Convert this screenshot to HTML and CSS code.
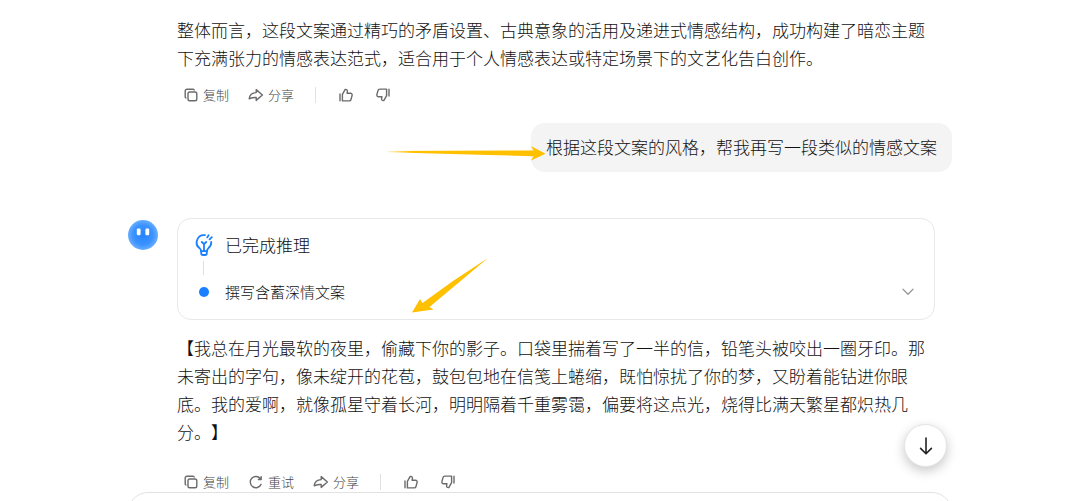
FILE: index.html
```
<!DOCTYPE html>
<html lang="zh-CN">
<head>
    <meta charset="UTF-8">
    <meta name="viewport" content="width=device-width, initial-scale=1.0">
    <title>情感文案</title>
    <link rel="stylesheet" href="styles.css">
</head>
<body>
    <!-- Shared icons -->
    <svg class="sprite" aria-hidden="true">
        <symbol id="icon-copy" viewBox="0 0 16 16">
            <rect x="5" y="5" width="8.8" height="8.8" rx="1.8"/>
            <path d="M3 11A1.500 1.500 0 0 1 2.200 9.700V4A1.800 1.800 0 0 1 4 2.200H9.900A1.500 1.500 0 0 1 11.200 3"/>
        </symbol>
        <symbol id="icon-retry" viewBox="0 0 16 16">
            <path d="M13 10.400A5.600 5.600 0 1 1 12.600 5M13.200 2.600V5.500H10.400"/>
        </symbol>
        <symbol id="icon-share" viewBox="0 0 16 16">
            <path d="M8.200 2.600L14.400 8L8.200 13.400V10.500C5.400 10.200 3.600 10.800 1.200 11.800C1.600 8.200 4 5.700 8.200 5.600Z"/>
        </symbol>
        <symbol id="icon-like" viewBox="0 0 16 16">
            <path d="M2 7V13.800M4.400 7.300L7.200 2.400C8.900 2.200 9.600 3.200 9.400 4.400L9.100 6.300H12.400C13.700 6.300 14.400 7.300 14.100 8.400L13 12.500C12.800 13.400 12.100 13.900 11.200 13.900H4.400Z"/>
        </symbol>
    </svg>

    <main class="chat">
        <section class="answer">
            <p class="text">整体而言，这段文案通过精巧的矛盾设置、古典意象的活用及递进式情感结构，成功构建了暗恋主题下充满张力的情感表达范式，适合用于个人情感表达或特定场景下的文艺化告白创作。</p>
            <div class="toolbar">
                <button type="button"><svg><use href="#icon-copy"/></svg>复制</button>
                <button type="button"><svg><use href="#icon-share"/></svg>分享</button>
                <span class="divider"></span>
                <button type="button" class="vote" aria-label="赞"><svg><use href="#icon-like"/></svg></button>
                <button type="button" class="vote down" aria-label="踩"><svg><use href="#icon-like"/></svg></button>
            </div>
        </section>

        <section class="question">
            <div class="bubble">
                根据这段文案的风格，帮我再写一段类似的情感文案
                <svg class="arrow arrow-right" viewBox="0 0 158 16" aria-hidden="true">
                    <defs>
                        <linearGradient id="fade" x1="0" x2="1" y1="0" y2="0">
                            <stop offset="0" stop-color="#ffc000" stop-opacity="0.2"/>
                            <stop offset="0.15" stop-color="#ffc000"/>
                        </linearGradient>
                    </defs>
                    <path fill="url(#fade)" d="M0 6L145.500 5.500L143 1L157.500 8.800L143 15.500L145.500 11.200L100 10L0 7.200Z"/>
                </svg>
            </div>
        </section>

        <section class="answer latest">
            <svg class="avatar" viewBox="0 0 30 30" aria-hidden="true">
                <defs>
                    <radialGradient id="face">
                        <stop offset="0" stop-color="#2484ff"/>
                        <stop offset="0.65" stop-color="#3a92ff"/>
                        <stop offset="1" stop-color="#69adff"/>
                    </radialGradient>
                </defs>
                <circle cx="15" cy="15" r="15" fill="url(#face)"/>
                <rect x="8.800" y="8.600" width="3.800" height="6.600" rx="1.200" fill="#fff"/>
                <rect x="17.400" y="8.600" width="3.800" height="6.600" rx="1.200" fill="#fff"/>
            </svg>

            <div class="steps">
                <div class="step step-done">
                    <svg class="bulb" viewBox="0 0 18 24" aria-hidden="true">
                        <path d="M10 2.200A7.300 7.300 0 0 0 4.800 15.400C5.800 16.200 6 17.200 6 18.200H12C12 17.200 12.300 16.200 13.300 15.300A7.300 7.300 0 0 0 16.200 8.800"/>
                        <path d="M6.200 18.500V20.300A1.700 1.700 0 0 0 7.900 22H10.100A1.700 1.700 0 0 0 11.800 20.300V18.500M6.800 9L9 11.200L11.200 9M9 11.200V17.600M12.200 4.400L13.600 2.200M14.600 6.400L16.800 4.200"/>
                    </svg>
                    <span>已完成推理</span>
                </div>
                <div class="line"></div>
                <div class="step">
                    <span class="dot"></span>
                    <span>撰写含蓄深情文案</span>
                    <button type="button" class="expand" aria-label="展开">
                        <svg viewBox="0 0 12 8"><path d="M1 1.200L6 6.200L11 1.200"/></svg>
                    </button>
                </div>
                <svg class="arrow arrow-down" viewBox="0 0 78 56" aria-hidden="true">
                    <path fill="#ffc000" d="M77 0L18.500 49L22.500 51.500L1 54.500L9 41L11.500 45L42 23Z"/>
                </svg>
            </div>

            <p class="text">【我总在月光最软的夜里，偷藏下你的影子。口袋里揣着写了一半的信，铅笔头被咬出一圈牙印。那未寄出的字句，像未绽开的花苞，鼓包包地在信笺上蜷缩，既怕惊扰了你的梦，又盼着能钻进你眼底。我的爱啊，就像孤星守着长河，明明隔着千重雾霭，偏要将这点光，烧得比满天繁星都炽热几分。】</p>
            <div class="toolbar">
                <button type="button"><svg><use href="#icon-copy"/></svg>复制</button>
                <button type="button"><svg><use href="#icon-retry"/></svg>重试</button>
                <button type="button"><svg><use href="#icon-share"/></svg>分享</button>
                <span class="divider"></span>
                <button type="button" class="vote" aria-label="赞"><svg><use href="#icon-like"/></svg></button>
                <button type="button" class="vote down" aria-label="踩"><svg><use href="#icon-like"/></svg></button>
            </div>

            <button type="button" class="to-bottom" aria-label="回到底部">
                <svg viewBox="0 0 14 18"><path d="M7 1V16.500M1.600 11.400L7 16.800L12.400 11.400"/></svg>
            </button>
        </section>

        <textarea class="composer" aria-label="输入消息"></textarea>
    </main>
</body>
</html>
```

FILE: styles.css
```
* {
    box-sizing: border-box;
}
html, body {
    height: 100%;
    margin: 0;
}
body {
    overflow: hidden;
    background: #fff;
    color: #111;
    font-family: "Noto Sans CJK SC", sans-serif;
    font-size: 17px;
    font-weight: 300;
    line-height: 28px;
    text-spacing-trim: space-all;
}
button {
    display: flex;
    align-items: center;
    padding: 0;
    border: none;
    background: none;
    color: inherit;
    font: inherit;
    cursor: pointer;
}
svg {
    flex: none;
    fill: none;
    stroke-linecap: round;
    stroke-linejoin: round;
}
.sprite {
    position: absolute;
    width: 0;
    height: 0;
}
.chat {
    max-width: 824px;
    margin: 0 auto;
    padding-top: 16px;
}
.answer {
    position: relative;
    padding: 0 17px 0 49px;
}
.text {
    margin: 0;
}

/* Buttons below an answer */
.toolbar {
    display: flex;
    align-items: center;
    gap: 19px;
    height: 20px;
    margin-top: 13px;
    padding-left: 6px;
    color: #444;
    font-size: 13px;
    line-height: 20px;
}
.toolbar button {
    gap: 4px;
}
.toolbar svg {
    width: 16px;
    height: 16px;
    stroke: #6b6b6b;
    stroke-width: 1.4;
}
.divider {
    width: 1px;
    height: 16px;
    margin: 0 3px 0 2px;
    background: #e2e2e2;
}
.vote + .vote {
    margin-left: 2px;
}
.down svg {
    transform: rotate(180deg);
}

/* User message */
.question {
    display: flex;
    justify-content: flex-end;
    margin: 18px 0 46px;
}
.bubble {
    position: relative;
    padding: 10px 15px 11px;
    border-radius: 14px;
    background: #f4f4f4;
}
.arrow {
    position: absolute;
}
.arrow-right {
    top: 22px;
    right: 406px;
    width: 158px;
    height: 16px;
}
.arrow-down {
    top: 39px;
    left: 233px;
    width: 78px;
    height: 56px;
}

/* Reasoning card */
.avatar {
    position: absolute;
    top: 2px;
    left: 0;
    width: 30px;
    height: 30px;
}
.steps {
    position: relative;
    margin-bottom: 14px;
    padding: 12px 20px 13px 17px;
    border: 1px solid #e8e8e8;
    border-radius: 14px;
}
.step {
    display: flex;
    align-items: center;
    gap: 12px;
    font-size: 15px;
}
.step-done {
    font-size: 17px;
}
.bulb {
    width: 18px;
    height: 24px;
    stroke: #1a80ff;
    stroke-width: 1.8;
}
.line {
    width: 1px;
    height: 14px;
    margin: 2px 0 3px 8px;
    background: #dedede;
}
.dot {
    width: 10px;
    height: 10px;
    margin: 0 4px;
    border-radius: 50%;
    background: #1a80ff;
}
.expand {
    margin-left: auto;
}
.expand svg {
    width: 12px;
    height: 8px;
    stroke: #999;
    stroke-width: 1.3;
}

.latest .toolbar {
    margin-top: 26px;
}
.to-bottom {
    position: absolute;
    right: 5px;
    bottom: 25px;
    justify-content: center;
    width: 43px;
    height: 43px;
    border: 1px solid #e4e4e4;
    border-radius: 50%;
    background: #fff;
    box-shadow: 0 4px 12px rgba(0, 0, 0, 0.22);
}
.to-bottom svg {
    width: 14px;
    height: 18px;
    stroke: #222;
    stroke-width: 1.6;
}
.composer {
    display: block;
    width: 100%;
    height: 120px;
    padding: 16px;
    border: 1px solid #e2e2e2;
    border-radius: 20px;
    outline: none;
    resize: none;
    font: inherit;
}
```
